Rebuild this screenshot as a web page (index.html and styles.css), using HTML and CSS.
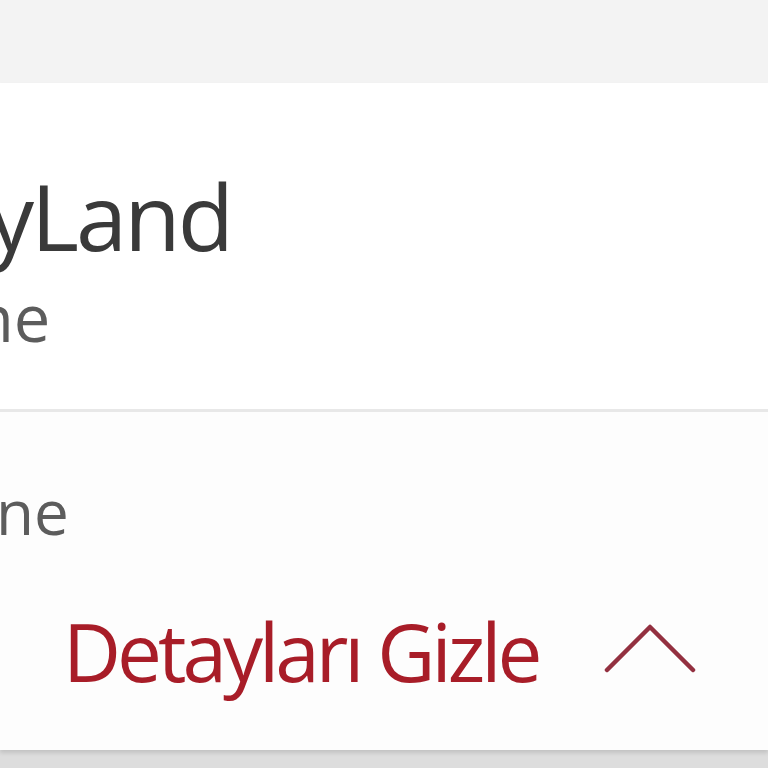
FILE: index.html
```html
<!DOCTYPE html>
<html lang="tr">
<head>
<meta charset="utf-8">
<link rel="stylesheet" href="styles.css">
</head>
<body>
<div class="topbar"></div>
<div class="card">
  <div class="head">
    <div class="line title">yLand</div>
    <div class="line sub">ne</div>
  </div>
  <div class="details">
    <div class="line sub sub2">ne</div>
    <div class="line toggle"><span class="toggle-text">Detayları Gizle</span><svg class="chev" width="92" height="50" viewBox="0 0 92 50"><polyline points="3,46 46,3 89,46" fill="none" stroke="#933040" stroke-width="4.5" stroke-linecap="round" stroke-linejoin="round"/></svg></div>
  </div>
</div>
<div class="bottom"></div>
</body>
</html>
```
FILE: styles.css
```css
html, body {
  margin: 0;
  padding: 0;
}
body {
  width: 768px;
  height: 768px;
  overflow: hidden;
  background: #dddddd;
  font-family: "Open Sans", "Noto Sans", sans-serif;
}
.topbar {
  height: 83px;
  background: #f3f3f3;
}
.card {
  height: 667px;
  background: #ffffff;
  overflow: hidden;
  box-shadow: 0 3px 4px rgba(0, 0, 0, 0.12);
  display: flex;
  flex-direction: column;
}
.head {
  height: 329px;
  flex: none;
  box-sizing: border-box;
  border-bottom: 3px solid #e8e8e8;
}
.line {
  line-height: 0;
  white-space: nowrap;
}
.line::before {
  content: "";
  display: inline-block;
  vertical-align: baseline;
}
.title {
  font-size: 92px;
  color: #3a3a3a;
  margin-left: -12px;
  letter-spacing: -3px;
}
.title::before { height: 168px; }
.sub {
  font-size: 65px;
  color: #5c5c5c;
  margin-left: -26px;
}
.head .sub::before { height: 91px; }
.details {
  flex: 1;
  background: #fdfdfd;
}
.sub2 {
  font-size: 62px;
  margin-left: -4px;
}
.details .sub2::before { height: 123px; }
.toggle {
  padding-left: 63px;
}
.toggle::before { height: 147px; }
.toggle-text {
  display: inline-block;
  width: 541px;
  font-size: 80px;
  color: #a81d28;
  letter-spacing: -4px;
}
.chev {
  vertical-align: baseline;
  margin-bottom: 8px;
}
.bottom {
  height: 18px;
}
```
